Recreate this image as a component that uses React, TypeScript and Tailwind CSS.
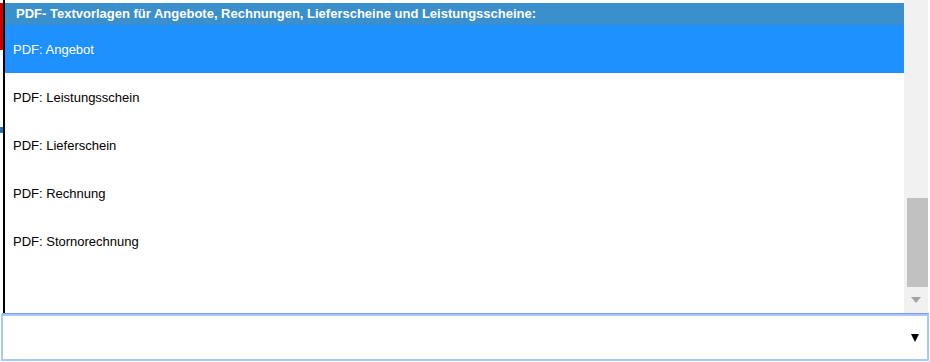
import React from "react";

const items = [
  "PDF: Angebot",
  "PDF: Leistungsschein",
  "PDF: Lieferschein",
  "PDF: Rechnung",
  "PDF: Stornorechnung",
];

const App: React.FC = () => {
  return (
    <div
      className="w-[930px] h-[362px] bg-white overflow-hidden"
      style={{ fontFamily: '"Liberation Sans", Arial, sans-serif' }}
    >
      <div className="flex h-[313px]">
        {/* bits of the page behind the list */}
        <div className="w-[3px] flex flex-col">
          <div className="h-[3px]" />
          <div className="h-[47px] bg-[#d40000]" />
          <div className="h-[77px]" />
          <div className="h-[6px] bg-[#2f6fb0]" />
        </div>
        <div className="w-[2px] bg-black" />

        {/* listbox */}
        <div className="flex-1 flex flex-col pt-[3px]">
          <div className="h-[22px] bg-[#3a8fcd] text-white font-bold text-[13px] flex items-center pl-[11px]">
            PDF- Textvorlagen für Angebote, Rechnungen, Lieferscheine und Leistungsscheine:
          </div>
          {items.map((item, i) => (
            <div
              key={item}
              className={
                i === 0
                  ? "h-[48px] flex items-center pl-[8px] pt-[2px] text-[13px] bg-[#1e90ff] text-white"
                  : "h-[48px] flex items-center pl-[8px] pt-[2px] text-[13px] text-black"
              }
            >
              {item}
            </div>
          ))}
        </div>

        {/* scrollbar */}
        <div className="w-[24px] bg-[#f1f1f1] flex flex-col items-center">
          <div className="h-[198px]" />
          <div className="w-[21px] h-[89px] bg-[#c1c1c1] ml-[2px]" />
          <div className="flex-1 flex items-center justify-center">
            <svg width="10" height="6" viewBox="0 0 10 6">
              <polygon points="0,0 10,0 5,6" fill="#a3a3a3" />
            </svg>
          </div>
        </div>
        <div className="w-[2px]" />
      </div>

      {/* select box */}
      <div className="h-px bg-[#7f9edb] ml-[2px] w-[927px]" />
      <div className="ml-[1px] w-[928px] h-[47px] border-2 border-[#a6c8fb] flex items-center justify-end pr-[8px]">
        <svg width="8" height="8" viewBox="0 0 8 8">
          <polygon points="0,0 8,0 4,8" fill="#000" />
        </svg>
      </div>
    </div>
  );
};

export default App;
